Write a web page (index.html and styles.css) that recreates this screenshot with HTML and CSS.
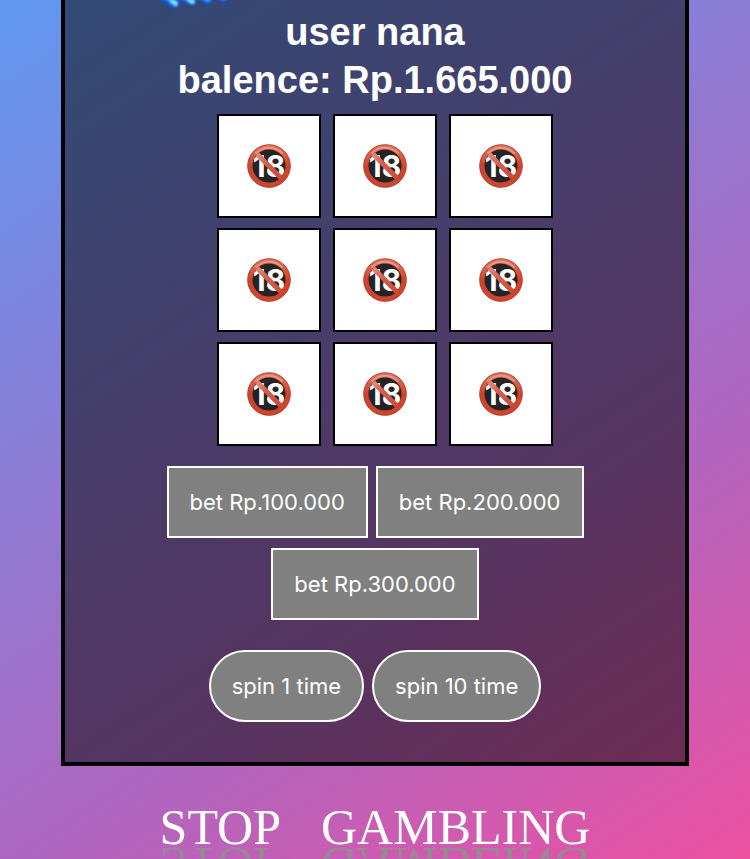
FILE: index.html
```
<!DOCTYPE html>
<html lang="en">
<head>
<meta charset="utf-8">
<meta name="viewport" content="width=device-width, initial-scale=1">
<title>Stop Gambling</title>
<link rel="stylesheet" href="styles.css">
</head>
<body>
<svg width="0" height="0" class="defs" aria-hidden="true">
  <defs>
    <linearGradient id="ring" x1="0" y1="0" x2="0" y2="1">
      <stop offset="0" stop-color="#de705c"/>
      <stop offset="0.5" stop-color="#d0432d"/>
      <stop offset="1" stop-color="#cc4630"/>
    </linearGradient>
    <linearGradient id="bar" x1="0" y1="0" x2="1" y2="1">
      <stop offset="0" stop-color="#e6988a"/>
      <stop offset="0.4" stop-color="#d4604c"/>
      <stop offset="1" stop-color="#cb4a36"/>
    </linearGradient>
    <symbol id="adult" viewBox="0 0 44 44">
      <circle cx="22" cy="22" r="18" fill="#262324"/>
      <text x="22" y="33" class="age">18</text>
      <path d="M8 8L36 36" stroke="url(#bar)" stroke-width="5"/>
      <circle cx="22" cy="22" r="19" fill="none" stroke="url(#ring)" stroke-width="5"/>
      <circle cx="22" cy="22" r="21.3" fill="none" stroke="#b83c26" stroke-width="0.8"/>
      <path d="M9 9A18.5 18.5 0 0 1 35 9" fill="none" stroke="#f3b5a6" stroke-width="2" stroke-linecap="round" opacity="0.6"/>
    </symbol>
  </defs>
</svg>
<main class="machine">
  <svg class="neon" viewBox="0 0 76 12" aria-hidden="true">
    <defs>
      <filter id="glow" x="-20%" y="-50%" width="140%" height="200%"><feGaussianBlur stdDeviation="0.8"/></filter>
    </defs>
    <g fill="none" stroke-linecap="round" filter="url(#glow)">
      <path d="M6-4L17 3M24-5L34 1M42-6L50-1M58-7L66-3" stroke="#1553dc" stroke-width="10"/>
      <path d="M9-4L18 3M26-5L35 1M43-6L51-1M59-7L67-3" stroke="#2ba0fa" stroke-width="6"/>
      <path d="M15 1L19 4M32 0L36 2" stroke="#8aeafc" stroke-width="3"/>
    </g>
  </svg>
  <h1 class="status">user nana</h1>
  <h1 class="status">balence: Rp.1.665.000</h1>
  <div class="reels">
    <div class="cell"><svg><use href="#adult"/></svg></div>
    <div class="cell"><svg><use href="#adult"/></svg></div>
    <div class="cell"><svg><use href="#adult"/></svg></div>
    <div class="cell"><svg><use href="#adult"/></svg></div>
    <div class="cell"><svg><use href="#adult"/></svg></div>
    <div class="cell"><svg><use href="#adult"/></svg></div>
    <div class="cell"><svg><use href="#adult"/></svg></div>
    <div class="cell"><svg><use href="#adult"/></svg></div>
    <div class="cell"><svg><use href="#adult"/></svg></div>
  </div>
  <div class="bets">
    <button type="button">bet Rp.100.000</button>
    <button type="button">bet Rp.200.000</button>
    <button type="button">bet Rp.300.000</button>
  </div>
  <div class="spins">
    <button type="button">spin 1 time</button>
    <button type="button">spin 10 time</button>
  </div>
</main>
<footer class="slogan"><span data-text="STOP">STOP</span><span data-text="GAMBLING">GAMBLING</span></footer>
</body>
</html>
```
FILE: styles.css
```
* { box-sizing: border-box; }

body {
  margin: 0;
  min-height: 100vh;
  overflow: hidden;
  color: white;
  background: linear-gradient(147deg, #6098f0, #b066c0 66%, #ec50a0);
  font-family: "Liberation Sans", sans-serif;
}

.defs { position: absolute; }

.age {
  fill: white;
  font: 700 30px Inter, sans-serif;
  text-anchor: middle;
}

.machine {
  position: relative;
  width: 84%;
  max-width: 628px;
  margin: 0 auto;
  padding: 8px 80px 40px;
  border: 4px solid black;
  border-top: 0;
  background: rgba(0, 0, 0, 0.5);
}

.neon {
  position: absolute;
  top: 0;
  left: 92px;
  width: 76px;
  height: 12px;
}

.status {
  margin: 0;
  font-size: 38px;
  line-height: 48px;
  text-align: center;
  white-space: nowrap;
}

.reels {
  display: grid;
  grid-template-columns: repeat(3, 104px);
  justify-content: center;
  gap: 10px 12px;
  margin: 10px 0 20px 20px;
}

.cell {
  display: grid;
  place-items: center;
  height: 104px;
  border: 2px solid black;
  background: white;
}

.cell svg {
  width: 44px;
  height: 44px;
}

.bets,
.spins {
  display: flex;
  flex-wrap: wrap;
  justify-content: center;
  gap: 10px 8px;
}

.spins { margin-top: 30px; }

button {
  height: 72px;
  padding: 0 21px;
  border: 2px solid white;
  border-radius: 0;
  color: white;
  background: gray;
  font: 22px Inter, sans-serif;
}

.spins button { border-radius: 36px; }

.slogan {
  display: flex;
  justify-content: center;
  gap: 40px;
  height: 93px;
  padding-top: 33px;
  font: 50px/56px "Liberation Serif", serif;
}

.slogan span { position: relative; }

/* Mirror image of the word, flipped just under its baseline */
.slogan span::after {
  content: attr(data-text);
  position: absolute;
  top: 0;
  left: 0;
  color: #909090;
  opacity: 0.85;
  transform: scaleY(-1);
  transform-origin: 0 47px;
}
```
